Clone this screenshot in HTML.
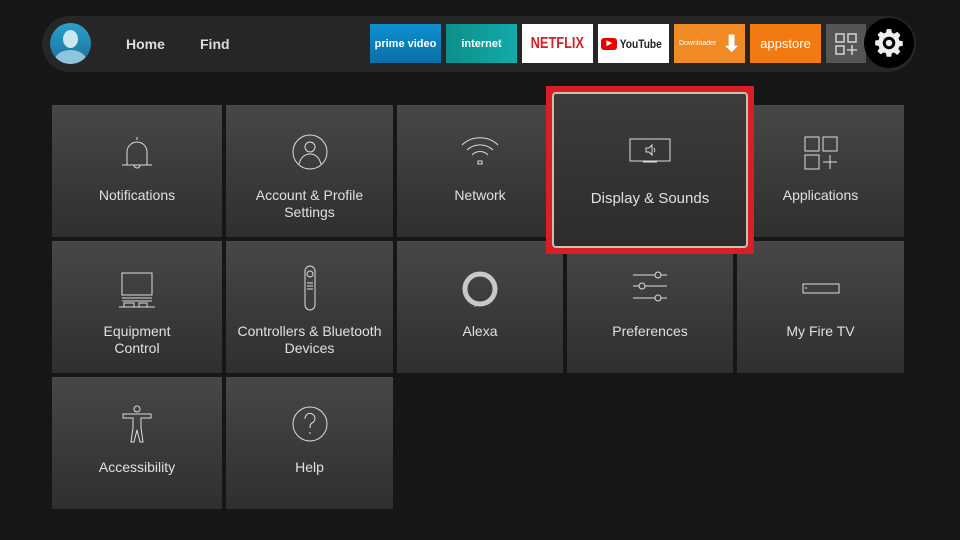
<!DOCTYPE html>
<html><head><meta charset="utf-8"><style>
*{margin:0;padding:0;box-sizing:border-box}
body{width:960px;height:540px;background:#161616;font-family:"Liberation Sans",sans-serif;position:relative;overflow:hidden;color:#ddd}
.nav{position:absolute;left:42px;top:16px;width:874px;height:56px;background:#262626;border-radius:28px}
.av{position:absolute;left:50px;top:23px;width:41px;height:41px;border-radius:50%;background:linear-gradient(#2aa0cf,#1a6f98);overflow:hidden}
.nl{position:absolute;top:36px;font-size:14px;font-weight:bold;color:#ddd}
.app{position:absolute;top:24px;height:39px;display:flex;align-items:center;justify-content:center}
.t{position:absolute;background:linear-gradient(#474747,#2f2f2f);}
.lb{position:absolute;left:0;right:0;text-align:center;font-size:14px;line-height:17px;color:#e0e0e0}
.ic{position:absolute;left:50%;transform:translateX(-50%)}
</style></head><body>
<div class="nav"></div>
<div class="av"><div style="position:absolute;left:13px;top:7px;width:15px;height:18px;border-radius:50%;background:#cde6f0"></div><div style="position:absolute;left:5px;top:27px;width:31px;height:20px;border-radius:50%;background:#8ec4dc"></div></div>
<div class="nl" style="left:126px">Home</div>
<div class="nl" style="left:200px">Find</div>
<div class="app" style="left:370px;width:71px;background:linear-gradient(#0e8fd0,#0a6ea8);color:#fff;font-size:11px;font-weight:bold">prime video</div>
<div class="app" style="left:446px;width:71px;background:linear-gradient(90deg,#0c8f8a,#12aaaa);color:#fff;font-size:11px;font-weight:bold">internet</div>
<div class="app" style="left:522px;width:71px;background:#fff;color:#d81f26;font-size:16px;font-weight:bold"><span style="display:inline-block;transform:scaleX(.8)">NETFLIX</span></div>
<div class="app" style="left:598px;width:71px;background:#fff;color:#222;font-size:12px;font-weight:bold"><span style="display:inline-block;width:16px;height:12px;background:#e00;border-radius:3px;margin-right:2px;color:#fff;font-size:7px;line-height:12px;text-align:center">▶</span><span style="display:inline-block;transform:scaleX(.85);margin-left:-3px">YouTube</span></div>
<div class="app" style="left:674px;width:71px;background:#f08a24;color:#fff;font-size:7px;justify-content:flex-start;padding-left:5px">Downloader<span style="font-size:22px;margin-left:6px;font-weight:bold">⬇</span></div>
<div class="app" style="left:750px;width:71px;background:#f37a12;color:#fff;font-size:13px">appstore</div>
<div class="app" style="left:826px;width:40px;background:#555"><svg width="24" height="24" viewBox="0 0 24 24" fill="none" stroke="#ccc" stroke-width="1.6"><rect x="2" y="2" width="8" height="8"/><rect x="14" y="2" width="8" height="8"/><rect x="2" y="14" width="8" height="8"/><path d="M18 13v10M13 18h10"/></svg></div>
<div style="position:absolute;left:864px;top:18px;width:50px;height:50px;border-radius:50%;background:#000;display:flex;align-items:center;justify-content:center"><svg width="30" height="30" viewBox="0 0 24 24"><path fill="#eee" d="M10 1h4l.6 3 2 1 2.6-1.7 2.8 2.8L20.3 9l.8 2 2.9.5v4l-3 .6-.8 2 1.7 2.6-2.8 2.8L16.5 21.3l-2 .8-.5 2.9h-4l-.6-3-2-.8-2.6 1.7-2.8-2.8L3.7 17.5l-.8-2L0 15v-4l3-.6.8-2L2.1 5.8 4.9 3 7.5 4.7l2-.8z" transform="scale(.92) translate(1 0)"/><circle cx="12" cy="12" r="5" fill="#000"/><circle cx="12" cy="12" r="2.6" fill="#eee"/></svg></div>

<!-- row1 -->
<div class="t" style="left:52px;top:105px;width:170px;height:132px"><svg class="ic" style="top:30px" width="36" height="36" viewBox="0 0 36 36" fill="none" stroke="#ddd" stroke-width="1"><path d="M18 2v3M8 30V17a10 10 0 0 1 20 0v13M3 30h30M15 30a3 3 0 0 0 6 0"/></svg><div class="lb" style="top:82px">Notifications</div></div>
<div class="t" style="left:226px;top:105px;width:167px;height:132px"><svg class="ic" style="top:28px" width="38" height="38" viewBox="0 0 38 38" fill="none" stroke="#ddd" stroke-width="1"><circle cx="19" cy="19" r="17"/><circle cx="19" cy="14" r="5"/><path d="M8 31c2-7 6-10 11-10s9 3 11 10"/></svg><div class="lb" style="top:82px">Account &amp; Profile<br>Settings</div></div>
<div class="t" style="left:397px;top:105px;width:166px;height:132px"><svg class="ic" style="top:30px" width="40" height="34" viewBox="0 0 40 34" fill="none" stroke="#ddd" stroke-width="1"><path d="M2 10a26 26 0 0 1 36 0M7 15a19 19 0 0 1 26 0M12 20a11 11 0 0 1 16 0"/><rect x="18" y="26" width="4" height="3"/></svg><div class="lb" style="top:82px">Network</div></div>
<div class="t" style="left:737px;top:105px;width:167px;height:132px"><svg class="ic" style="top:30px" width="36" height="36" viewBox="0 0 36 36" fill="none" stroke="#ddd" stroke-width="1"><rect x="2" y="2" width="14" height="14"/><rect x="20" y="2" width="14" height="14"/><rect x="2" y="20" width="14" height="14"/><path d="M20 27h14M27 20v14"/></svg><div class="lb" style="top:82px">Applications</div></div>
<!-- row2 -->
<div class="t" style="left:52px;top:241px;width:170px;height:132px"><svg class="ic" style="top:28px" width="40" height="40" viewBox="0 0 40 40" fill="none" stroke="#ddd" stroke-width="1"><rect x="5" y="4" width="30" height="22"/><path d="M5 29h30M5 32h30M2 38h36M7 38v-4h10v4M22 38v-4h8v4"/></svg><div class="lb" style="top:82px">Equipment<br>Control</div></div>
<div class="t" style="left:226px;top:241px;width:167px;height:132px"><svg class="ic" style="top:24px" width="14" height="46" viewBox="0 0 14 46" fill="none" stroke="#ddd" stroke-width="1"><rect x="2" y="1" width="10" height="44" rx="5"/><circle cx="7" cy="9" r="3"/><path d="M4 18h6M4 21h6M4 24h6"/></svg><div class="lb" style="top:82px">Controllers &amp; Bluetooth<br>Devices</div></div>
<div class="t" style="left:397px;top:241px;width:166px;height:132px"><svg class="ic" style="top:28px" width="38" height="40" viewBox="0 0 38 40"><circle cx="19" cy="20" r="15" fill="none" stroke="#c8c8c8" stroke-width="5"/><path d="M19 35l-6 3 2-6z" fill="#c8c8c8"/></svg><div class="lb" style="top:82px">Alexa</div></div>
<div class="t" style="left:567px;top:241px;width:166px;height:132px"><svg class="ic" style="top:30px" width="36" height="34" viewBox="0 0 36 34" fill="none" stroke="#ddd" stroke-width="1"><path d="M1 4h22M29 4h6M1 15h6M13 15h22M1 27h22M29 27h6"/><circle cx="26" cy="4" r="3"/><circle cx="10" cy="15" r="3"/><circle cx="26" cy="27" r="3"/></svg><div class="lb" style="top:82px">Preferences</div></div>
<div class="t" style="left:737px;top:241px;width:167px;height:132px"><svg class="ic" style="top:42px" width="38" height="12" viewBox="0 0 38 12" fill="none" stroke="#ddd" stroke-width="1"><rect x="1" y="1" width="36" height="9"/><path d="M4 4v2"/></svg><div class="lb" style="top:82px">My Fire TV</div></div>
<!-- row3 -->
<div class="t" style="left:52px;top:377px;width:170px;height:132px"><svg class="ic" style="top:28px" width="30" height="38" viewBox="0 0 30 38" fill="none" stroke="#ddd" stroke-width="1"><circle cx="15" cy="4" r="3"/><path d="M1 9h28v4H19v10l2 14h-3l-3-12-3 12H9l2-14V13H1z"/></svg><div class="lb" style="top:82px">Accessibility</div></div>
<div class="t" style="left:226px;top:377px;width:167px;height:132px"><svg class="ic" style="top:28px" width="38" height="38" viewBox="0 0 38 38" fill="none" stroke="#ddd" stroke-width="1"><circle cx="19" cy="19" r="17"/><path d="M14 14a5 5 0 1 1 7 4c-2 1-2 3-2 5M19 27v2"/></svg><div class="lb" style="top:82px">Help</div></div>
<!-- highlighted (on top) -->
<div style="position:absolute;left:546px;top:86px;width:208px;height:168px;background:#d81f26;z-index:5"></div>
<div style="position:absolute;left:552px;top:92px;width:196px;height:156px;border-radius:4px;border:2px solid #cbbfb0;background:linear-gradient(#3c3c3c,#2c2c2c);z-index:6"><svg class="ic" style="top:44px" width="42" height="26" viewBox="0 0 42 26" fill="none" stroke="#ddd" stroke-width="1"><rect x="1" y="1" width="40" height="22"/><path d="M14 24h14"/><path d="M17 10h3l3-3v10l-3-3h-3z M25 10a3 3 0 0 1 0 4"/></svg><div class="lb" style="top:96px;font-size:15px">Display &amp; Sounds</div></div>
</body></html>
